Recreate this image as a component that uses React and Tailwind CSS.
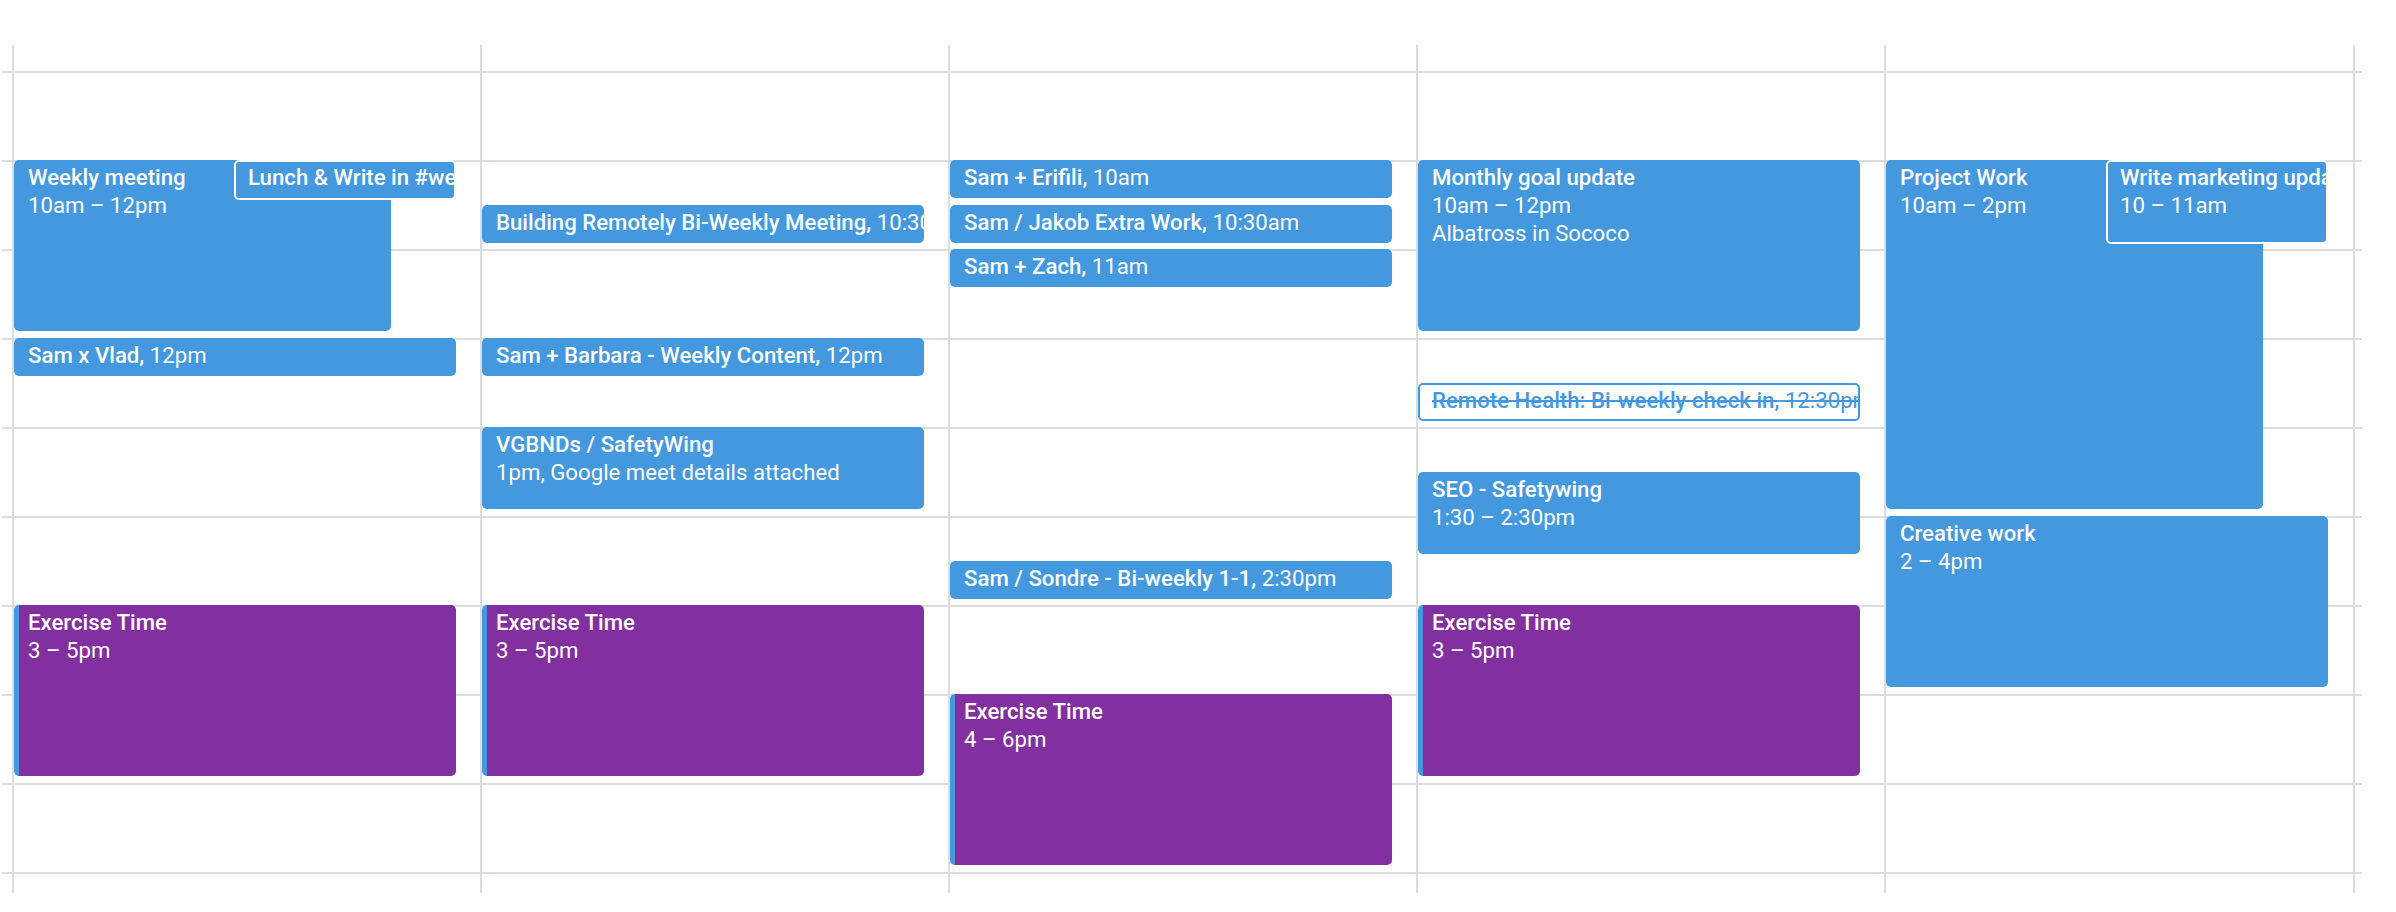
import React from 'react';

const HOUR = 89;
const GRAPE = 'grape';

// one entry per day column, times in hours (24h)
const days = [
  [
    { start: 10, dur: 2, title: 'Weekly meeting', lines: ['10am – 12pm'], width: 377 },
    { start: 10, dur: 0.5, title: 'Lunch & Write in #weekly-writing,', time: '10am', left: 220, width: 222, ringed: true },
    { start: 12, dur: 0.5, title: 'Sam x Vlad,', time: '12pm' },
    { start: 15, dur: 2, title: 'Exercise Time', lines: ['3 – 5pm'], color: GRAPE },
  ],
  [
    { start: 10.5, dur: 0.5, title: 'Building Remotely Bi-Weekly Meeting,', time: '10:30am' },
    { start: 12, dur: 0.5, title: 'Sam + Barbara - Weekly Content,', time: '12pm' },
    { start: 13, dur: 1, title: 'VGBNDs / SafetyWing', lines: ['1pm, Google meet details attached'] },
    { start: 15, dur: 2, title: 'Exercise Time', lines: ['3 – 5pm'], color: GRAPE },
  ],
  [
    { start: 10, dur: 0.5, title: 'Sam + Erifili,', time: '10am' },
    { start: 10.5, dur: 0.5, title: 'Sam / Jakob Extra Work,', time: '10:30am' },
    { start: 11, dur: 0.5, title: 'Sam + Zach,', time: '11am' },
    { start: 14.5, dur: 0.5, title: 'Sam / Sondre - Bi-weekly 1-1,', time: '2:30pm' },
    { start: 16, dur: 2, title: 'Exercise Time', lines: ['4 – 6pm'], color: GRAPE },
  ],
  [
    { start: 10, dur: 2, title: 'Monthly goal update', lines: ['10am – 12pm', 'Albatross in Sococo'] },
    { start: 12.5, dur: 0.5, title: 'Remote Health: Bi-weekly check in,', time: '12:30pm', declined: true },
    { start: 13.5, dur: 1, title: 'SEO - Safetywing', lines: ['1:30 – 2:30pm'] },
    { start: 15, dur: 2, title: 'Exercise Time', lines: ['3 – 5pm'], color: GRAPE },
  ],
  [
    { start: 10, dur: 4, title: 'Project Work', lines: ['10am – 2pm'], width: 377 },
    { start: 10, dur: 1, title: 'Write marketing update', lines: ['10 – 11am'], left: 220, width: 222, ringed: true },
    { start: 14, dur: 2, title: 'Creative work', lines: ['2 – 4pm'] },
  ],
];

function GridRows() {
  return (
    <>
      <div className="h-[26px]" />
      {Array.from({ length: 9 }).map((_, i) => (
        <div key={i} className="h-[89px] border-t-2 border-[#dadce0]" />
      ))}
      <div className="h-[21px] border-t-2 border-[#dadce0]" />
    </>
  );
}

function CalendarEvent({ ev }) {
  const top = Math.round(26 + (ev.start - 9) * HOUR);
  let height = Math.round(ev.dur * HOUR - 7);
  if (ev.ringed) height += 2;

  let look = 'bg-[#4398de] text-white pl-[14px] pt-[3px]';
  if (ev.color === GRAPE) look = 'bg-[#822fa0] text-white border-l-[5px] border-[#4398de] pl-[9px] pt-[3px]';
  if (ev.ringed) look = 'bg-[#4398de] text-white border-2 border-white pl-[12px] pt-[1px]';
  if (ev.declined) look = 'bg-white text-[#4398de] border-2 border-[#4398de] pl-[12px] pt-[1px] line-through';

  return (
    <div
      className={`absolute overflow-hidden rounded-[5px] whitespace-nowrap text-[22.2px] leading-[28px] ${look}`}
      style={{ top, height, left: ev.left || 0, width: ev.width || 442 }}
    >
      <div>
        <span className="font-medium">{ev.title}</span>
        {ev.time && <span> {ev.time}</span>}
      </div>
      {ev.lines && ev.lines.map((l) => <div key={l}>{l}</div>)}
    </div>
  );
}

export default function App() {
  return (
    <div className="w-[2396px] h-[912px] bg-white overflow-hidden pt-[45px] pl-[2px] flex items-start font-['Roboto','Liberation_Sans',sans-serif]">
      <div className="w-[10px] flex flex-col">
        <GridRows />
      </div>
      {days.map((events, i) => (
        <div
          key={i}
          className={
            i === days.length - 1
              ? 'relative w-[471px] flex flex-col border-x-2 border-[#dadce0]'
              : 'relative w-[468px] flex flex-col border-l-2 border-[#dadce0]'
          }
        >
          <GridRows />
          {events.map((ev) => (
            <CalendarEvent key={ev.title} ev={ev} />
          ))}
        </div>
      ))}
      <div className="w-[7px] flex flex-col">
        <GridRows />
      </div>
    </div>
  );
}
